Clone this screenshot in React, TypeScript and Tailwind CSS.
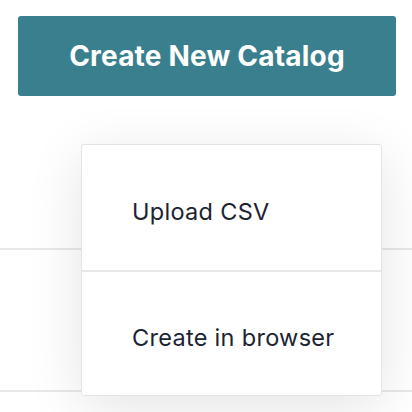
export default function App() {
  const items = ["Upload CSV", "Create in browser"];

  return (
    <div className="relative w-[412px] h-[412px] overflow-hidden bg-white font-['Inter',sans-serif]">
      <div className="pt-4 pl-[18px]">
        <button className="w-[378px] h-[80px] rounded-[3px] bg-[#397f8e] text-white text-[28px] font-bold tracking-[0.2px]">
          Create New Catalog
        </button>
      </div>

      {/* table rows behind the menu */}
      <div className="mt-[152px] border-t-2 border-[#e8e8e8] h-[142px]" />
      <div className="border-t-2 border-[#e8e8e8]" />

      <div className="absolute left-[81px] top-[144px] w-[301px] rounded-[3px] border border-[#e4e4e4] bg-white shadow-[0_12px_56px_rgba(0,0,0,0.11)]">
        {items.map((label, i) => (
          <div
            key={label}
            className={`flex items-center h-[125px] pl-[50px] pt-[9px] text-[23.5px] tracking-[0.3px] text-[#1c2331] ${i > 0 ? "border-t-2 border-[#e8e8e8]" : ""}`}
          >
            {label}
          </div>
        ))}
      </div>
    </div>
  );
}
